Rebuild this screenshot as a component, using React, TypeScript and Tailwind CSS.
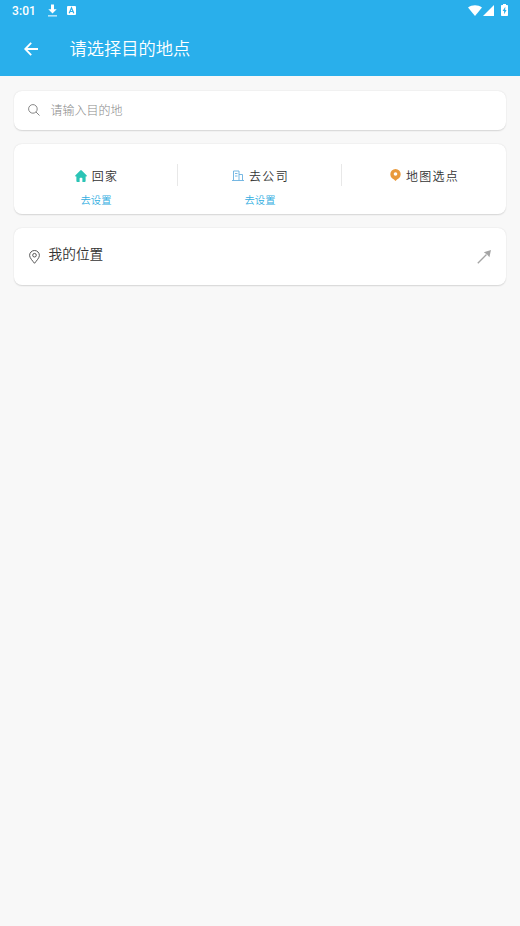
import type { ReactNode } from 'react';

function StatusBar() {
  return (
    <div className="flex h-[21px] items-center pl-3 pr-3 text-white">
      <span className="w-[24px] font-[Roboto,sans-serif] text-[12px] font-medium leading-none tracking-[0.1px]">3:01</span>
      <svg className="ml-3 h-[13px] w-[9px]" viewBox="0 0 9 13" fill="currentColor">
        <path d="M3 0.5h3v4.7h2.7L4.5 9.5.3 5.2H3z" />
        <path d="M0 11.2h9v1.3H0z" opacity=".8" />
      </svg>
      <svg className="ml-[10px] h-[9px] w-[9px]" viewBox="0 0 9 9">
        <rect width="9" height="9" rx="1" fill="#fff" />
        <path d="M2.2 7.2 4.5 1.8 6.8 7.2M3.1 5.5h2.8" fill="none" stroke="#29afeb" strokeWidth="1.200" />
      </svg>
      <svg className="-mt-px ml-auto h-[11px] w-[14px]" viewBox="0 0 14 11" fill="currentColor">
        <path d="M0 2.5C4-.5 10-.5 14 2.5L7 11z" />
      </svg>
      <svg className="ml-[1px] h-[11px] w-[11px]" viewBox="0 0 11 11" fill="currentColor">
        <path d="M11 0v11H0z" />
      </svg>
      <svg className="-mt-px ml-[7px] h-3 w-[7px]" viewBox="0 0 7 12">
        <path d="M2 0h3v1h1.2q.8 0 .8.8v9.4q0 .8-.8.8H.8q-.8 0-.8-.8V1.800q0-.8.8-.8H2z" fill="#fff" />
        <path d="M4.300 2.700 1.600 7h1.500v3.200L5.600 6H4.200z" fill="#29afeb" />
      </svg>
    </div>
  );
}

function SearchIcon() {
  return (
    <svg className="ml-[14px] h-3 w-3" viewBox="0 0 12 12" fill="none" stroke="#858585" strokeWidth="1">
      <circle cx="4.900" cy="4.900" r="4.300" />
      <path d="m8 8 3.500 3.500" />
    </svg>
  );
}

function HomeIcon() {
  return (
    <svg className="mb-px h-3 w-3" viewBox="0 0 13 12" fill="#2bc4b6" preserveAspectRatio="none">
      <path d="M5.700.4q.8-.7 1.600 0l5.200 4.900q.8.9-.3 1.200h-.7v4.500q0 1-1 1H8V8.500q0-.8-.8-.8H5.800q-.8 0-.8.8V12H2.500q-1 0-1-1V6.500H.8q-1.100-.3-.3-1.200z" />
    </svg>
  );
}

function CompanyIcon() {
  return (
    <svg className="mb-px h-3 w-3" viewBox="0 0 12 12" fill="none" stroke="#68b0e0" strokeWidth=".9">
      <path d="M0 10.500h12M1.500 10.500v-9.500h5.500v9.500M7 4.500h3.500v6M3 3.500h2.500M3 6h2.500" />
    </svg>
  );
}

function MapPinIcon() {
  return (
    <svg className="mb-[2px] h-3 w-[11px]" viewBox="0 0 11 12">
      <path d="M5.500 0A5.200 5.200 0 0 1 10.700 5.200C10.700 8 8.500 9.900 7 10.400L5.500 12 4 10.400C2.500 9.900.3 8 .3 5.200A5.200 5.200 0 0 1 5.500 0z" fill="#e99a3c" />
      <circle cx="5.500" cy="5" r="1.800" fill="#fff" />
    </svg>
  );
}

function Card({ className, children }: { className: string; children: ReactNode }) {
  return <section className={`rounded-[8px] bg-white shadow-[0_0.5px_1.5px_rgba(0,0,0,0.14)] ${className}`}>{children}</section>;
}

function Shortcut({ icon, label, action }: { icon: ReactNode; label: string; action?: string }) {
  return (
    <div className="flex flex-1 flex-col items-center pt-[22px]">
      <div className="flex h-5 items-center gap-[5px] pl-px text-[12px] tracking-[1.300px] text-[#333]">
        {icon}
        <span className="leading-5">{label}</span>
      </div>
      {action && <span className="mt-[6px] text-[10.300px] leading-4 text-[#31addf]">{action}</span>}
    </div>
  );
}

function Divider() {
  return <div className="-ml-px mt-5 h-[22px] w-px bg-[#e8e8e8]" />;
}

export default function App() {
  return (
    <main className="min-h-[926px] w-full bg-[#f8f8f8] font-['Noto_Sans_CJK_SC',sans-serif] font-[350]">
      <header className="h-[76px] bg-[#29afeb]">
        <StatusBar />
        <div className="flex h-[55px] items-center pl-6 text-white">
          <svg className="h-[14px] w-[14px]" viewBox="0 0 14 14" fill="none" stroke="currentColor" strokeWidth="1.800">
            <path d="M14 7H1.500M7.200.8 1.200 7l6 6.200" />
          </svg>
          <h1 className="mb-[2px] ml-[31.500px] text-[17.250px] font-[350] leading-6">请选择目的地点</h1>
        </div>
      </header>
      <div className="flex flex-col gap-[14px] px-[14px] pt-[15px]">
        <Card className="flex h-[39px] items-center pb-px">
          <SearchIcon />
          <span className="ml-[10.500px] text-[12px] font-light leading-5 text-[#8a8a8a]">请输入目的地</span>
        </Card>
        <Card className="flex h-[70px]">
          <Shortcut icon={<HomeIcon />} label="回家" action="去设置" />
          <Divider />
          <Shortcut icon={<CompanyIcon />} label="去公司" action="去设置" />
          <Divider />
          <Shortcut icon={<MapPinIcon />} label="地图选点" />
        </Card>
        <Card className="flex h-[57px] items-center">
          <svg className="ml-[15px] h-[14px] w-[11px]" viewBox="0 0 11 14" fill="none" stroke="#444" strokeWidth=".9">
            <path d="M5.500 13.300C3.500 10.700.6 7.900.6 5.400a4.900 4.900 0 0 1 9.800 0c0 2.500-2.900 5.300-4.900 7.900z" />
            <circle cx="5.500" cy="5.200" r="1.800" />
          </svg>
          <span className="mb-[7px] ml-[8.500px] text-[13.700px] leading-5 text-[#333]">我的位置</span>
          <svg className="mb-px ml-auto mr-[14px] h-[15px] w-[15px]" viewBox="0 0 15 15">
            <path d="M.8 14.200 9.500 5.500" stroke="#a5a5a5" strokeWidth="1.300" />
            <path d="m14 1-1.600 7.200-2.300-2.800L6.800 3.200z" fill="#a5a5a5" />
          </svg>
        </Card>
      </div>
    </main>
  );
}
